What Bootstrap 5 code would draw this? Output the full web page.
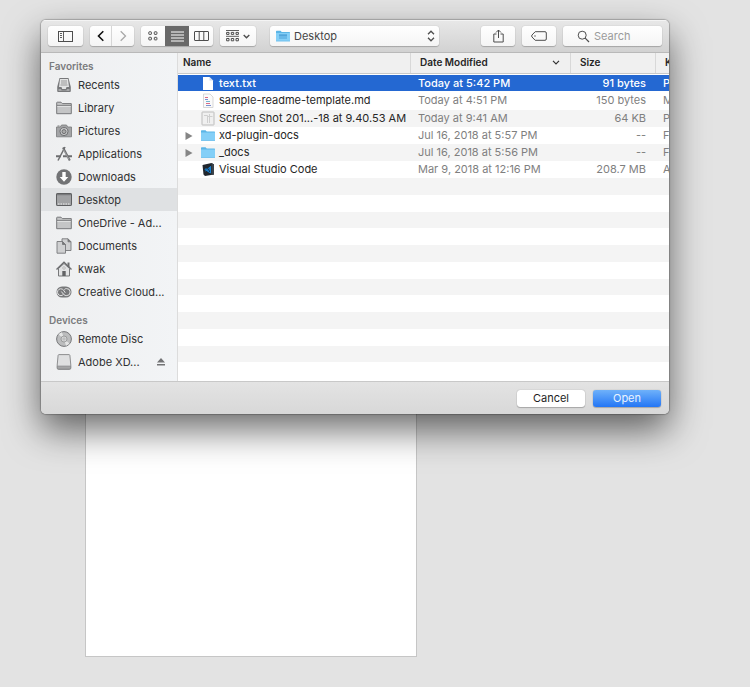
<!DOCTYPE html>
<html lang="en">
<head>
<meta charset="utf-8">
<meta name="viewport" content="width=device-width, initial-scale=1">
<title>Open file</title>
<link href="https://cdn.jsdelivr.net/npm/bootstrap@5.3.0/dist/css/bootstrap.min.css" rel="stylesheet">
<style>
body { background: #e3e3e3; font-family: Inter, "Liberation Sans", sans-serif; font-size: 11px; line-height: 14px; color: #262626; }
.canvas { padding: 20px 81px 0 41px; }
.file-dialog { position: relative; z-index: 1; border-radius: 5px; box-shadow: 0 0 1px 1px rgba(0,0,0,.22), 0 16px 36px rgba(0,0,0,.58); }
.dialog-inner { border-radius: 5px; }
.tool-bar { height: 33px; padding: 0 7px; gap: 7px; background: linear-gradient(#e8e8e8, #d2d2d2); border-bottom: 1px solid #b9b9b9; box-shadow: inset 0 1px #f4f4f4; }
.tool { height: 20px; border: 0; padding: 0; background: linear-gradient(#fff, #f5f5f5); border-radius: 3px; box-shadow: 0 0 1px rgba(0,0,0,.3), 0 1px 1px rgba(0,0,0,.2); color: #4d4d4d; display: flex; align-items: center; justify-content: center; }
.w-panel { width: 35px; } .w-nav { width: 22px; } .w-view { width: 24px; } .w-group { width: 36px; } .w-act { width: 34px; }
.tool-set { border-radius: 3px; box-shadow: 0 0 1px rgba(0,0,0,.3), 0 1px 1px rgba(0,0,0,.2); }
.tool-set .tool { box-shadow: none; border-radius: 0; }
.tool-set .tool:first-child { border-radius: 3px 0 0 3px; }
.tool-set .tool:last-child { border-radius: 0 3px 3px 0; }
.tool-set .tool.picked { background: #696969; color: #fff; }
.nav-set .tool:first-child { border-right: 1px solid #d6d6d6; }
.place { width: 169px; margin-left: 7px; padding: 0 4px 0 6px; gap: 4px; }
.place select, .find input { appearance: none; border: 0; padding: 0; background: none; outline: 0; font-size: 11px; line-height: 14px; color: #454545; min-width: 0; }
.find { width: 99px; padding: 0 6px 0 14px; gap: 4px; }
.find input::placeholder { color: #9b9b9b; opacity: 1; }
.side { width: 137px; flex: none; background: linear-gradient(90deg, #eeeff0, #f2f4f6); border-right: 1px solid #dcdcdc; padding: 6px 0 8px; }
.side h2 { font-size: 10px; line-height: 14px; font-weight: 600; color: #7a7b7d; margin: 0; padding-left: 8px; }
.side h2.devices { margin-top: 10px; }
.side a { height: 23px; padding: 0 8px 0 15px; gap: 6px; color: #303132; text-decoration: none; white-space: nowrap; }
.side a.here { background: #dfe1e3; }
.side svg { flex: none; }
.files { table-layout: fixed; width: 100%; border-collapse: collapse; }
.c-date { width: 160px; } .c-size { width: 85px; } .c-kind { width: 14px; }
.files th { height: 20px; padding: 0 10px 1px; font-size: 10px; font-weight: 600; color: #262626; background: #f0f0f0; border-bottom: 1px solid #c9c9c9; box-shadow: inset 1px 0 #d8d8d8; white-space: nowrap; }
.files th:first-child { box-shadow: none; padding-left: 5px; }
.files td { height: 17px; padding: 0 8px; line-height: 15px; color: #7f7f7f; white-space: nowrap; overflow: hidden; }
.files th:last-child, .files td:last-child { padding-right: 0; overflow: hidden; }
.files td:nth-child(3) { text-align: right; padding-right: 9px; }
.files td:first-child { color: #262626; padding-left: 7px; }
.files tr.gap-row td { height: 2px; padding: 0; line-height: 0; }
.files tr.tall td { height: 19px; }
.files tr.odd-row td { background: #f4f4f4; }
.files tr.chosen td, .files tr.chosen td:first-child { background: #2468d2; color: #fff; font-weight: 500; height: 16px; }
.twist { width: 16px; flex: none; }
.entry-icon { width: 14px; height: 15px; flex: none; margin-right: 4px; }
.blank-row:nth-child(odd) { background: #f4f4f4; }
.blank-rows { padding-bottom: 2px; background: #fff; }
.foot { height: 33px; padding: 0 8px; gap: 8px; background: linear-gradient(#e3e3e3, #d8d8d8); border-top: 1px solid #c8c8c8; }
.foot button { width: 68px; height: 17px; padding: 0; border: 0; border-radius: 3px; font-size: 11px; line-height: 17px; background: #fff; color: #1e1e1e; box-shadow: 0 0 1px rgba(0,0,0,.4), 0 1px 1px rgba(0,0,0,.2); }
.foot button.go { background: linear-gradient(#6fb1fa, #2376f5); color: #e9f3ff; }
.artboard { width: 332px; height: 243px; margin-left: 44px; background: #fff; border: 1px solid #c6c6c6; border-top: 0; }
</style>
<script src="https://cdn.jsdelivr.net/npm/bootstrap@5.3.0/dist/js/bootstrap.bundle.min.js"></script>
</head>
<body>
<svg class="d-none">
  <symbol id="folder" viewBox="0 0 14 12"><path d="M0 1.5Q0 .8.7.8H4.5L5.8 2H13.4Q14 2 14 2.6V3.5H0Z" fill="#5bb5e6"/><path d="M0 3H14V10.7Q14 11.3 13.4 11.3H.6Q0 11.3 0 10.7Z" fill="#84cff7"/><path d="M0 11H14" stroke="#6abce9" stroke-width=".7"/></symbol>
  <symbol id="gfolder" viewBox="0 0 16 14"><path d="M.7 12.7V1.8Q.7 1.2 1.3 1.2H5L6.4 2.6H15.3V12.7Z" fill="#c4c5c6" stroke="#77787a"/><path d="M1 4.4H15" stroke="#77787a"/><path d="M1.3 5.4H14.7" stroke="#e2e3e3"/></symbol>
</svg>
<main class="canvas">
  <section class="file-dialog" role="dialog" aria-label="Open file">
    <div class="dialog-inner overflow-hidden d-flex flex-column">
      <div class="tool-bar d-flex align-items-center">
        <button class="tool w-panel" aria-label="Toggle sidebar"><svg width="15" height="11" viewBox="0 0 15 11" fill="none" stroke="currentColor"><rect x=".5" y=".5" width="14" height="10"/><path d="M5.5.5V10.500M2 2.500H4M2 4.500H4M2 6.500H4" stroke-width=".9"/></svg></button>
        <div class="tool-set nav-set d-flex">
          <button class="tool w-nav" aria-label="Back"><svg width="8" height="12" viewBox="0 0 8 12" fill="none" stroke="#111" stroke-width="1.600"><path d="M6.300 1.200 1.500 6l4.800 4.800"/></svg></button>
          <button class="tool w-nav" aria-label="Forward"><svg width="8" height="12" viewBox="0 0 8 12" fill="none" stroke="#a8a8a8" stroke-width="1.300"><path d="M1.700 1.200 6.500 6l-4.800 4.800"/></svg></button>
        </div>
        <div class="tool-set d-flex">
          <button class="tool w-view" aria-label="Icons"><svg width="10" height="10" viewBox="0 0 10 10" fill="none" stroke="currentColor"><rect x=".8" y=".8" width="2.600" height="2.600" rx=".5"/><rect x="6.300" y=".8" width="2.600" height="2.600" rx=".5"/><rect x=".8" y="6.300" width="2.600" height="2.600" rx=".5"/><rect x="6.300" y="6.300" width="2.600" height="2.600" rx=".5"/></svg></button>
          <button class="tool w-view picked" aria-label="List"><svg width="13" height="11" viewBox="0 0 13 11" stroke="currentColor"><path d="M0 1H13M0 4H13M0 7H13M0 10H13"/></svg></button>
          <button class="tool w-view" aria-label="Columns"><svg width="15" height="10" viewBox="0 0 15 10" fill="none" stroke="currentColor"><rect x=".5" y=".5" width="14" height="9" rx=".5"/><path d="M5.200.5V9.500M9.800.5V9.500"/></svg></button>
        </div>
        <button class="tool w-group gap-1" aria-label="Group items"><svg width="13" height="12" viewBox="0 0 13 12" fill="none" stroke="currentColor"><path d="M0 .5H13M0 6.300H13" stroke-width=".9"/><path d="M.6 2.400H3V4.400H.6ZM5.300 2.400H7.700V4.400H5.300ZM10 2.400H12.400V4.400H10ZM.6 8.500H3V10.800H.6ZM5.300 8.500H7.700V10.800H5.300ZM10 8.500H12.400V10.800H10Z"/></svg><svg width="7" height="5" viewBox="0 0 7 5" fill="none" stroke="currentColor" stroke-width="1.400"><path d="M.7.900 3.500 3.700 6.300.900"/></svg></button>
        <div class="tool place">
          <svg width="14" height="12"><use href="#folder"/><path d="M3 5H11V9H3Z" fill="#68b8e8"/><path d="M3 5H11" stroke="#3e92cd"/></svg>
          <select class="flex-fill" aria-label="Location"><option>Desktop</option></select>
          <svg width="8" height="12" viewBox="0 0 8 12" fill="none" stroke="currentColor" stroke-width="1.300"><path d="M1 4.200 4 1.200 7 4.200M1 7.800 4 10.800 7 7.800"/></svg>
        </div>
        <button class="tool w-act ms-auto" aria-label="Share"><svg width="11" height="14" viewBox="0 0 11 14" fill="none" stroke="currentColor"><path d="M3.500 5H.8V13H10.200V5H7.500M5.500 9V1M3 3.500 5.500 1 8 3.500"/></svg></button>
        <button class="tool w-act" aria-label="Tags"><svg width="16" height="10" viewBox="0 0 16 10" fill="none" stroke="currentColor"><path d="M4.200.7H14Q15.300.7 15.300 2V8Q15.300 9.300 14 9.300H4.200L1 6Q.2 5 1 4Z"/><circle cx="4" cy="5" r=".7" fill="currentColor" stroke="none"/></svg></button>
        <div class="tool find"><svg width="13" height="13" viewBox="0 0 13 13" fill="none" stroke="currentColor" class="flex-shrink-0"><circle cx="5.200" cy="5.200" r="4"/><path d="M8.200 8.200 12 12" stroke-width="1.200"/></svg><input class="flex-fill" type="text" placeholder="Search" aria-label="Search"></div>
      </div>
      <div class="d-flex">
        <nav class="side" aria-label="Places">
          <h2>Favorites</h2>
          <a href="#" class="d-flex align-items-center"><svg width="16" height="16" viewBox="0 0 16 16"><path d="M3.500 1H12.500L14.800 10V14Q14.800 15 13.800 15H2.200Q1.200 15 1.200 14V10Z" fill="#77787a"/><path d="M4 2H12L13 10H10.500L9.800 12H6.200L5.500 10H3Z" fill="#e2e3e3"/><path d="M5 4H11M5 6H11M4.500 8H11.500" stroke="#999"/><path d="M2.500 12H5L5.600 13.500H10.400L11 12H13.500V14H2.500Z" fill="#a7a8a9"/></svg>Recents</a>
          <a href="#" class="d-flex align-items-center"><svg width="16" height="14"><use href="#gfolder"/></svg>Library</a>
          <a href="#" class="d-flex align-items-center"><svg width="16" height="14" viewBox="0 0 16 14"><path d="M.5 3H4.300L5.500 1H10.500L11.700 3H15.500V12.800H.5Z" fill="#a3a4a6" stroke="#77787a" stroke-width=".8"/><path d="M1.500 2H3.500" stroke="#77787a"/><circle cx="8" cy="7.600" r="4" fill="#c9cacb" stroke="#6d6e70"/><circle cx="8" cy="7.600" r="2" fill="#aaa" stroke="#6d6e70"/></svg>Pictures</a>
          <a href="#" class="d-flex align-items-center"><svg width="16" height="16" viewBox="0 0 16 16" fill="none" stroke="#6d6e70"><path d="M9 1 2 14.500" stroke-width="1.500"/><path d="M7 1.500 13.800 14.500" stroke-width="2"/><path d="M0 10.300H5M7 10.300H16" stroke-width="1.900"/><path d="M7.500 3.500 13 13.500" stroke="#d0d1d2" stroke-width=".5"/></svg>Applications</a>
          <a href="#" class="d-flex align-items-center"><svg width="16" height="16" viewBox="0 0 16 16"><circle cx="8" cy="8" r="7.700" fill="#727375"/><path d="M6.300 3H9.700V8H12.300L8 12.700 3.700 8H6.300Z" fill="#fff"/></svg>Downloads</a>
          <a href="#" class="here d-flex align-items-center"><svg width="16" height="13" viewBox="0 0 16 13"><rect x=".5" y=".5" width="15" height="12" rx=".6" fill="#a1a2a4" stroke="#5e5f61"/><path d="M1 1.700H15" stroke="#707173"/><path d="M2 11H14" stroke="#eee" stroke-dasharray="1.500 1"/></svg>Desktop</a>
          <a href="#" class="d-flex align-items-center"><svg width="16" height="14"><use href="#gfolder"/></svg>OneDrive - Ad...</a>
          <a href="#" class="d-flex align-items-center"><svg width="16" height="16" viewBox="0 0 16 16" fill="#cfd0d1" stroke="#77787a" stroke-width=".9"><path d="M6 .8H12L15 3.800V12.500H6Z"/><path d="M12 .8V3.800H15" fill="#777"/><path d="M1 3.500H6.500L9.500 6.500V15.200H1Z"/><path d="M6.500 3.500V6.500H9.500Z" fill="#777"/></svg>Documents</a>
          <a href="#" class="d-flex align-items-center"><svg width="16" height="16" viewBox="0 0 16 16"><path d="M2.500 7.500 8 2.500 13.500 7.500V15H2.500Z" fill="#e2e3e4" stroke="#77787a"/><path d="M11.500 1.500H13.500V6H11.500Z" fill="#6d6e70"/><path d="M.5 8.500 8 1.300 15.500 8.500" fill="none" stroke="#6d6e70" stroke-width="1.400"/><rect x="6.300" y="10" width="3.400" height="5" fill="#626365"/><circle cx="8" cy="7" r="1.200" fill="#fff" stroke="#888" stroke-width=".6"/></svg>kwak</a>
          <a href="#" class="d-flex align-items-center"><svg width="16" height="12" viewBox="0 0 16 12" fill="none"><rect x=".5" y=".5" width="15" height="11" rx="5.500" fill="#77787a"/><path d="M7.500 8.300Q6.300 9.600 4.900 9.600A3.400 3.400 0 1 1 7.600 4.200L9.300 6.800M5.300 5.500 7.600 8.300Q9 9.900 10.800 9.600A3.500 3.500 0 0 0 10.500 2.600Q9.200 2.600 8.300 3.500" stroke="#eee" stroke-width=".9"/></svg>Creative Cloud...</a>
          <h2 class="devices">Devices</h2>
          <a href="#" class="d-flex align-items-center"><svg width="16" height="16" viewBox="0 0 16 16"><circle cx="8" cy="8" r="7.400" fill="#bcbdbe" stroke="#77787a"/><path d="M8 8 2.500 3.500A7 7 0 0 1 6 1.300ZM8 8 13.500 12.500A7 7 0 0 1 10 14.700Z" fill="#e4e5e5"/><circle cx="8" cy="8" r="3" fill="#d5d6d7" stroke="#88898a" stroke-width=".7"/><circle cx="8" cy="8" r="1" fill="#fff" stroke="#88898a" stroke-width=".6"/></svg>Remote Disc</a>
          <a href="#" class="d-flex align-items-center"><svg width="16" height="16" viewBox="0 0 16 16"><path d="M3 .6H13Q13.700.6 13.900 1.400L14.800 11V14Q14.800 15.400 13.600 15.400H2.400Q1.200 15.400 1.200 14V11L2.100 1.400Q2.300.6 3 .6Z" fill="#dfe0e1" stroke="#838486" stroke-width=".9"/><path d="M1.400 12H14.600V14Q14.600 15 13.600 15H2.400Q1.400 15 1.400 14Z" fill="#a5a6a7" stroke="#838486" stroke-width=".6"/></svg>Adobe XD...<svg class="ms-auto me-1" width="8" height="8" viewBox="0 0 8 8" fill="#727375"><path d="M4 0 8 4.500H0ZM0 6H8V7.500H0Z"/></svg></a>
        </nav>
        <div class="flex-fill d-flex flex-column bg-white">
          <table class="files">
            <colgroup><col><col class="c-date"><col class="c-size"><col class="c-kind"></colgroup>
            <thead><tr><th scope="col">Name</th><th scope="col"><div class="d-flex align-items-center justify-content-between">Date Modified<svg width="8" height="5" viewBox="0 0 8 5" fill="none" stroke="#333" stroke-width="1.200"><path d="M1 .8 4 3.800 7 .8"/></svg></div></th><th scope="col">Size</th><th scope="col">K</th></tr></thead>
            <tbody>
              <tr class="gap-row" aria-hidden="true"><td colspan="4"></td></tr>
              <tr class="chosen"><td><div class="d-flex align-items-center"><span class="twist"></span><svg class="entry-icon" viewBox="0 0 14 15"><path d="M2 1H8.500L12 4.500V14H2Z" fill="#fff"/><path d="M8.500 1V4.500H12" fill="#cfdcf0"/></svg>text.txt</div></td><td>Today at 5:42 PM</td><td>91 bytes</td><td>P</td></tr>
              <tr class="tall"><td><div class="d-flex align-items-center"><span class="twist"></span><svg class="entry-icon" viewBox="0 0 14 15"><path d="M2.500 1H9L12 4V14.500H2.500Z" fill="#fafafa" stroke="#c9c9c9" stroke-width=".7"/><path d="M4 4.500H7M5 10.500H9" stroke="#db6d86"/><path d="M4 6.500H7M5 12.500H10" stroke="#7b8fd0"/><path d="M5 8.500H9" stroke="#74b5cf"/></svg>sample-readme-template.md</div></td><td>Today at 4:51 PM</td><td>150 bytes</td><td>M</td></tr>
              <tr class="odd-row"><td><div class="d-flex align-items-center"><span class="twist"></span><svg class="entry-icon" viewBox="0 0 14 15"><rect x="1" y="1" width="12" height="13" rx=".5" fill="#f0f0f0" stroke="#bcbcbc"/><path d="M3 4.500H6.500V12M8.500 3V12M7 5.500H11.500" stroke="#cfcfcf" fill="none"/></svg>Screen Shot 201...-18 at 9.40.53 AM</div></td><td>Today at 9:41 AM</td><td>64 KB</td><td>P</td></tr>
              <tr><td><div class="d-flex align-items-center"><span class="twist"><svg class="d-block" width="8" height="8" viewBox="0 0 8 8" fill="#858585"><path d="M.500 0 7.500 4 .500 8Z"/></svg></span><svg class="entry-icon"><use href="#folder" width="14" height="15"/></svg>xd-plugin-docs</div></td><td>Jul 16, 2018 at 5:57 PM</td><td>--</td><td>F</td></tr>
              <tr class="odd-row"><td><div class="d-flex align-items-center"><span class="twist"><svg class="d-block" width="8" height="8" viewBox="0 0 8 8" fill="#858585"><path d="M.500 0 7.500 4 .500 8Z"/></svg></span><svg class="entry-icon"><use href="#folder" width="14" height="15"/></svg>_docs</div></td><td>Jul 16, 2018 at 5:56 PM</td><td>--</td><td>F</td></tr>
              <tr><td><div class="d-flex align-items-center"><span class="twist"></span><svg class="entry-icon" viewBox="0 0 14 15"><path d="M1.500 3 10.500 1 13 2.500V12.500L4 14 2.500 12.500Z" fill="#20262d"/><path d="M10.500 1 13 2.500V12.500L10.500 13Z" fill="#3b434b"/><path d="M9.500 4.500V11L4 7.500 5 6.500 7.500 9.500ZM9.500 4.500 4.500 9" fill="none" stroke="#1681d4" stroke-width="1"/></svg>Visual Studio Code</div></td><td>Mar 9, 2018 at 12:16 PM</td><td>208.7 MB</td><td>A</td></tr>
            </tbody>
          </table>
          <div class="blank-rows flex-fill d-flex flex-column" aria-hidden="true">
            <div class="blank-row flex-fill"></div><div class="blank-row flex-fill"></div><div class="blank-row flex-fill"></div><div class="blank-row flex-fill"></div>
            <div class="blank-row flex-fill"></div><div class="blank-row flex-fill"></div><div class="blank-row flex-fill"></div><div class="blank-row flex-fill"></div>
            <div class="blank-row flex-fill"></div><div class="blank-row flex-fill"></div><div class="blank-row flex-fill"></div><div class="blank-row flex-fill"></div>
          </div>
        </div>
      </div>
      <div class="foot d-flex align-items-center justify-content-end"><button type="button">Cancel</button><button type="button" class="go">Open</button></div>
    </div>
  </section>
  <div class="artboard"></div>
</main>
</body>
</html>
